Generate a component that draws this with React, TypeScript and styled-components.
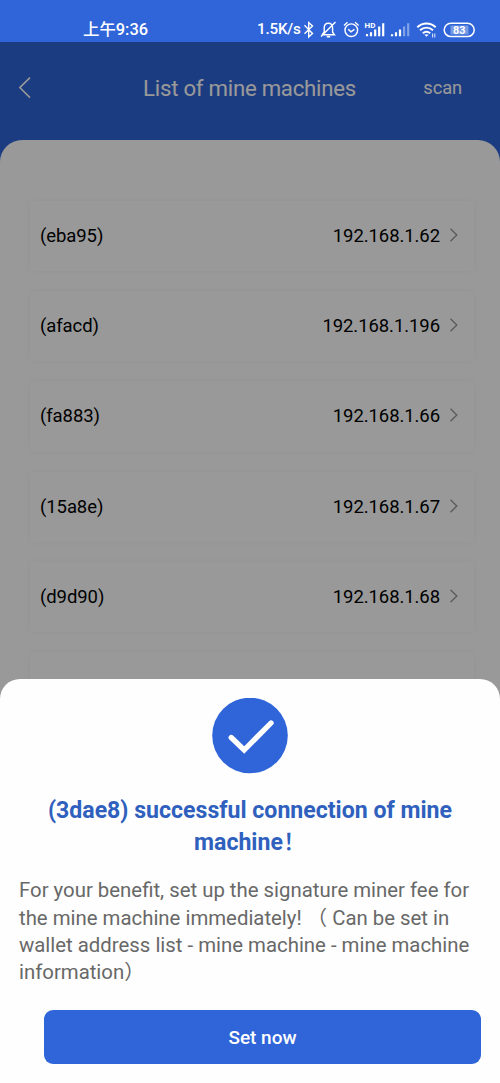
import React from "react";
import styled, { createGlobalStyle } from "styled-components";

const GlobalStyle = createGlobalStyle`
  * { box-sizing: border-box; }
  body { margin: 0; font-family: Roboto, "Noto Sans CJK SC", sans-serif; background: #fff; }
`;

const Phone = styled.div`
  position: relative;
  display: flex;
  flex-direction: column;
  width: 500px;
  height: 1083px;
  overflow: hidden;
  background: #2f65d8;
`;

const StatusBar = styled.div`
  display: flex;
  align-items: center;
  justify-content: space-between;
  flex: none;
  height: 42px;
  padding: 17px 25px 0 83px;
  color: #fff;
`;

const Clock = styled.span`
  font-size: 16.4px;
  line-height: 26px;
  font-weight: 500;
  white-space: nowrap;
`;

const StatusIcons = styled.div`
  display: flex;
  align-items: center;
  height: 26px;
`;

const Speed = styled.span`
  width: 46px;
  padding-bottom: 1px;
  font-size: 15.2px;
  font-weight: 500;
  letter-spacing: -0.2px;
  white-space: nowrap;
`;

const StatusSvg = styled.svg`
  display: block;
  flex: none;
`;

const Screen = styled.div`
  position: relative;
  display: flex;
  flex-direction: column;
  flex: 1;
  min-height: 0;
`;

const Header = styled.header`
  display: grid;
  grid-template-columns: 80px 1fr 80px;
  align-items: center;
  flex: none;
  height: 98px;
  padding: 0 19px 6px 18px;
  color: #fff;
`;

const Title = styled.h1`
  margin: 0;
  font-size: 22.2px;
  font-weight: 400;
  letter-spacing: -0.25px;
  text-align: center;
  white-space: nowrap;
`;

const ScanLink = styled.span`
  padding: 0 19px 1px 0;
  font-size: 18.3px;
  line-height: 22px;
  letter-spacing: -0.1px;
  text-align: right;
`;

const ListPanel = styled.main`
  display: flex;
  flex-direction: column;
  gap: 20px;
  flex: 1;
  padding: 61px 26px 0 30px;
  border-radius: 22px 22px 0 0;
  background: #fff;
`;

const Row = styled.div`
  display: flex;
  align-items: center;
  flex: none;
  height: 70.2px;
  padding: 0 15px 0 10px;
  border-radius: 4px;
  box-shadow: 0 0 6px rgba(0, 0, 0, 0.04);
  color: #000;
  font-size: 18.5px;
  letter-spacing: -0.08px;
`;

const RowName = styled.span`
  flex: 1;
`;

const RowArrow = styled.svg`
  margin: 0 0 2px 9px;
`;

const Scrim = styled.div`
  position: absolute;
  inset: 0;
  background: rgba(0, 0, 0, 0.4);
`;

const Sheet = styled.section`
  position: absolute;
  left: 0;
  right: 0;
  bottom: 0;
  display: flex;
  flex-direction: column;
  height: 404.5px;
  padding: 19px 19px 19px;
  border-radius: 20px 20px 0 0;
  background: #fdfefd;
`;

const CheckMark = styled.svg`
  flex: none;
  align-self: center;
`;

const SheetTitle = styled.h2`
  margin: 21px 0 0;
  color: #2f60bd;
  font-size: 23.1px;
  line-height: 32px;
  font-weight: 700;
  text-align: center;
`;

const Punctuation = styled.span`
  font-weight: 500;
`;

const Line = styled.span<{ $height?: number }>`
  display: block;
  height: ${(p) => p.$height ?? 32}px;
  line-height: ${(p) => p.$height ?? 32}px;
  white-space: pre;
`;

const Message = styled.p`
  margin: 18px 0 0;
  color: #686868;
  font-size: 20.38px;
`;

const Button = styled.button`
  height: 54px;
  margin: auto 0 0 25px;
  border: 0;
  border-radius: 9px;
  background: #2f65d8;
  color: #fff;
  font-family: inherit;
  font-size: 19px;
  font-weight: 500;
`;

const machines = [
  { name: "(eba95)", ip: "192.168.1.62" },
  { name: "(afacd)", ip: "192.168.1.196" },
  { name: "(fa883)", ip: "192.168.1.66" },
  { name: "(15a8e)", ip: "192.168.1.67" },
  { name: "(d9d90)", ip: "192.168.1.68" },
  { name: "", ip: "" },
];

function StatusGlyphs() {
  return (
    <StatusSvg width="172" height="20" viewBox="303 19 172 20" fill="none" stroke="#fff" strokeWidth="1.4">
      {/* bluetooth */}
      <path d="M304.5 24.3 L312.5 32.5 L308.7 36 V21.5 L312.5 25 L304.5 32.8" />
      {/* muted bell */}
      <path d="M322 33.8 H334.5 L332.6 31.2 V27 C332.6 20.6 324.2 20.6 324.2 27 V31.2 L322 33.8 M326.8 35.8 H330.2 M321 35.5 L335.5 21" />
      {/* alarm clock */}
      <circle cx="351.3" cy="29.2" r="6.3" />
      <path d="M348.2 28.2 L351 30.8 L354.4 28.4 M344 24.5 L347.5 21.3 M358.6 24.5 L355.1 21.3" />
      {/* signal bars */}
      <g strokeWidth="2.2">
        <path d="M367 35.3 V33 M371 35.3 V31.2 M375.2 35.3 V28.5 M379.2 35.3 V25.5 M383.2 35.3 V22.2" />
        <path d="M392 35.3 V33.2 M396 35.3 V31.2 M400 35.3 V28.5" />
        <path d="M404.1 35.3 V25.5 M408.2 35.3 V22.2" opacity="0.4" />
      </g>
      <text x="364.6" y="26.6" fontSize="8" fontWeight="700" fill="#fff" stroke="none">HD</text>
      {/* wifi */}
      <g strokeWidth="2">
        <path d="M417.3 26.2 C422.7 21.4 430.3 21.4 435.7 26.2" />
        <path d="M420 29.3 C423.9 26 429.1 26 433 29.3" />
        <path d="M422.8 32.2 C425 30.4 428 30.4 430.2 32.2" />
      </g>
      <path d="M424.3 33.5 L426.5 35.8 L428.7 33.5 Z" fill="#fff" stroke="none" />
      <path d="M432.6 36.5 V32.6 M434.8 32.4 V36.4" strokeWidth="1.1" opacity="0.8" />
      {/* battery */}
      <rect x="450.5" y="24.5" width="18" height="9" fill="#fff" opacity="0.35" stroke="none" />
      <rect x="444.2" y="22.2" width="30" height="13.4" rx="6.7" strokeWidth="1.5" />
      <text x="459.2" y="32.9" textAnchor="middle" fontSize="10.8" fontWeight="700" fill="#fff" stroke="none">83</text>
    </StatusSvg>
  );
}

export default function App() {
  return (
    <Phone>
      <GlobalStyle />
      <StatusBar>
        <Clock>上午9:36</Clock>
        <StatusIcons>
          <Speed>1.5K/s</Speed>
          <StatusGlyphs />
        </StatusIcons>
      </StatusBar>
      <Screen>
        <Header>
          <svg width="14" height="22" viewBox="0 0 14 22" fill="none" stroke="#fff" strokeWidth="1.5">
            <path d="M12 0.6 L1.8 10.6 L12 20.6" />
          </svg>
          <Title>List of mine machines</Title>
          <ScanLink>scan</ScanLink>
        </Header>
        <ListPanel>
          {machines.map((m) => (
            <Row key={m.name}>
              <RowName>{m.name}</RowName>
              {m.ip && (
                <>
                  <span>{m.ip}</span>
                  <RowArrow width="10" height="14" viewBox="0 0 10 14" fill="none" stroke="#9a9a9a" strokeWidth="1.4">
                    <path d="M1.5 0.8 L7.8 7 L1.5 13.2" />
                  </RowArrow>
                </>
              )}
            </Row>
          ))}
        </ListPanel>
        <Scrim />
      </Screen>
      <Sheet>
        <CheckMark width="76" height="76" viewBox="0 0 76 76" fill="none">
          <circle cx="38" cy="37.5" r="37.8" fill="#2f65d8" />
          <path d="M19.2 39.5 L32.2 52 L59 25" stroke="#fff" strokeWidth="5.3" strokeLinecap="round" />
        </CheckMark>
        <SheetTitle>
          <Line>(3dae8) successful connection of mine</Line>
          <Line>machine<Punctuation>！</Punctuation></Line>
        </SheetTitle>
        <Message>
          <Line $height={27}>For your benefit, set up the signature miner fee for</Line>
          <Line $height={29}>the mine machine immediately! （ Can be set in</Line>
          <Line $height={24}>wallet address list - mine machine - mine machine</Line>
          <Line $height={30}>information）</Line>
        </Message>
        <Button>Set now</Button>
      </Sheet>
    </Phone>
  );
}
